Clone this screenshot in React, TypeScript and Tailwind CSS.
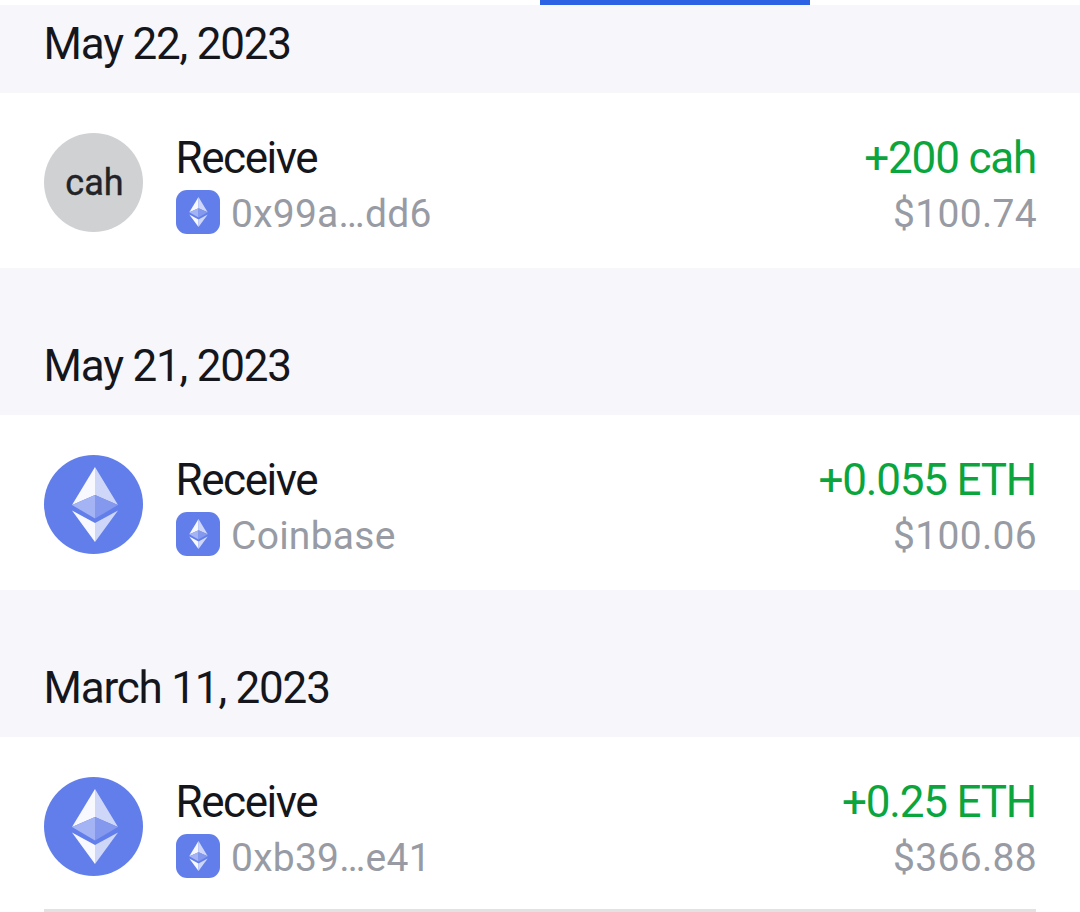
type Tx = {
  date: string;
  token: "cah" | "eth";
  from: string;
  amount: string;
  usd: string;
};

const transactions: Tx[] = [
  { date: "May 22, 2023", token: "cah", from: "0x99a…dd6", amount: "+200 cah", usd: "$100.74" },
  { date: "May 21, 2023", token: "eth", from: "Coinbase", amount: "+0.055 ETH", usd: "$100.06" },
  { date: "March 11, 2023", token: "eth", from: "0xb39…e41", amount: "+0.25 ETH", usd: "$366.88" },
];

function EthGlyph({ className }: { className?: string }) {
  return (
    <svg viewBox="0 0 46 75" className={className} aria-hidden="true">
      <path d="M23 0 L0 38 L23 28 Z" fill="#f8f9fe" />
      <path d="M23 0 L46 38 L23 28 Z" fill="#cfd7f9" />
      <path d="M23 28 L0 38 L23 51.5 Z" fill="#a3b3f3" />
      <path d="M23 28 L46 38 L23 51.5 Z" fill="#8499ed" />
      <path d="M0 43.5 L23 56 V75 Z" fill="#f8f9fe" />
      <path d="M46 43.5 L23 56 V75 Z" fill="#cfd7f9" />
    </svg>
  );
}

function TokenIcon({ token }: { token: Tx["token"] }) {
  if (token === "cah") {
    return (
      <div className="flex size-[99px] shrink-0 items-center justify-center rounded-full bg-[#d0d1d3] pl-[2px] text-[36px] leading-none text-[#222327] [-webkit-text-stroke:0.4px_#222327]">
        cah
      </div>
    );
  }
  return (
    <div className="flex size-[99px] shrink-0 items-center justify-center rounded-full bg-[#627eea]">
      <EthGlyph className="ml-[3px] h-[75px] w-[46px]" />
    </div>
  );
}

function TxRow({ tx }: { tx: Tx }) {
  return (
    <div className="flex h-[175px] bg-white px-11 pt-10">
      <TokenIcon token={tx.token} />
      <div className="ml-[33px] flex-1">
        <div className="-ml-[0.5px] h-[57px] text-[44px] leading-[51px] tracking-[-1.45px] text-[#15161c]">Receive</div>
        <div className="flex h-11 items-center">
          <div className="flex size-11 items-center justify-center rounded-[11px] bg-[#627eea]">
            <EthGlyph className="h-[30px] w-[19px]" />
          </div>
          <span className="ml-[11px] pt-[3px] text-[39px] leading-[44px] tracking-[0.25px] text-[#989ba3]">{tx.from}</span>
        </div>
      </div>
      <div className="text-right">
        <div className="h-[57px] text-[44px] leading-[51px] tracking-[-1.2px] text-[#0ba53e]">{tx.amount}</div>
        <div className="-mr-px text-[39px] leading-[48px] tracking-[0.3px] text-[#989ba3]">{tx.usd}</div>
      </div>
    </div>
  );
}

export default function App() {
  return (
    <div className="h-[912px] w-[1080px] overflow-hidden bg-white font-['Roboto',sans-serif]">
      {/* Active tab indicator */}
      <div className="flex h-[5px] justify-center">
        <div className="ml-[270px] h-full w-[270px] bg-[#2c61e4]" />
      </div>
      {transactions.map((tx, i) => (
        <section key={tx.date}>
          <h2
            className={`flex items-end bg-[#f6f6fb] px-[43.5px] pb-6 text-[44px] leading-[50px] tracking-[-1.2px] text-[#15161c] ${i === 0 ? "h-[88px]" : "h-[147px]"}`}
          >
            {tx.date}
          </h2>
          <TxRow tx={tx} />
        </section>
      ))}
      <div className="mx-11 -mt-[3px] h-[3px] bg-[#e2e2e4]" />
    </div>
  );
}
